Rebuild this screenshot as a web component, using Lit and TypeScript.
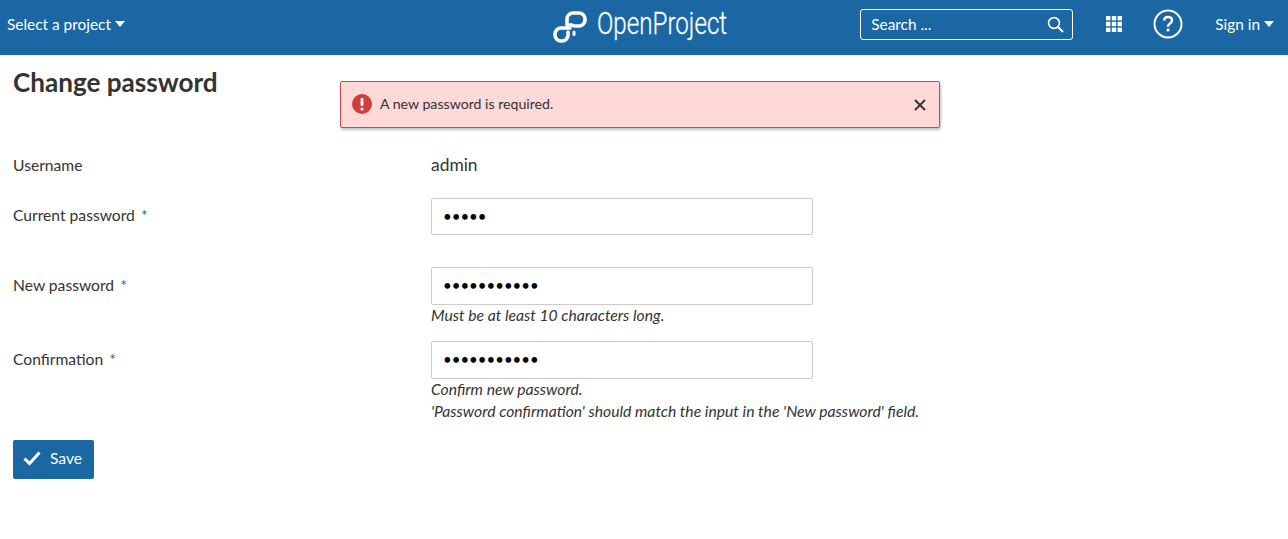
import { LitElement, html, css } from "lit";
import { customElement } from "lit/decorators.js";

@customElement("app-root")
export class AppRoot extends LitElement {
  static styles = css`
    :host { display: block; font-family: Lato, "Noto Sans", sans-serif; color: #333; position: relative; height: 539px; overflow: hidden; background: #fff; }
    .header { height: 55px; box-sizing: border-box; padding-bottom: 7px; background: #1a67a3; display: grid; grid-template-columns: 1fr auto 1fr; align-items: center; color: #fff; font-size: 15.4px; }
    .left { padding-left: 7px; display: flex; align-items: center; }
    .caret { display: inline-block; width: 0; height: 0; border-left: 5.5px solid transparent; border-right: 5.5px solid transparent; border-top: 6px solid #fff; margin-left: 4px; }
    .center { display: flex; align-items: center; gap: 9px; width: 174px; margin: 0 4px 0 -4px; }
    .center svg { margin-top: 5px; flex: none; }
    .logo-text { font-family: Roboto, sans-serif; font-weight: 300; font-size: 32px; line-height: 40px; width: 130px; transform: scaleX(0.755); transform-origin: left center; white-space: nowrap; margin-top: -3px; -webkit-text-stroke: 0.3px #fff; }
    .right { display: flex; align-items: center; justify-content: flex-end; padding-right: 14px; }
    .search { width: 213px; height: 31px; box-sizing: border-box; border: 1px solid #fff; border-radius: 3px; display: flex; align-items: center; justify-content: space-between; padding: 0 8px 0 10px; margin-right: 33px; }
    .help { margin: 0 32px 0 31px; display: flex; }
    .signin { display: flex; align-items: center; }
    .page { padding: 0 13px; position: relative; }
    h1 { margin: 0; padding-top: 11px; font-size: 26.1px; line-height: 32px; font-weight: 700; color: #333; }
    .flash { position: absolute; left: 340px; top: 81px; width: 600px; height: 47px; box-sizing: border-box; background: #ffd8d8; border: 1px solid #c44a4f; border-radius: 2px; box-shadow: 1px 2px 3px rgba(0,0,0,.25); display: flex; align-items: center; padding: 0 13px 2px 11px; font-size: 14.15px; color: #333; gap: 8px; }
    .flash span { flex: 1; margin-top: -1px; }
    .flash .close { margin-top: 2px; }
    form { margin: 0; padding-top: 57px; }
    .row { display: grid; grid-template-columns: 418px 382px; }
    .label { font-size: 15.65px; line-height: 20px; color: #333; }
    .label b { font-weight: 400; color: #1a67a3; margin-left: 2px; }
    .r-user { height: 43px; }
    .r-user .val { font-size: 17.4px; line-height: 20px; }
    .r-cur { height: 69px; }
    .r-new { height: 74px; }
    .r-conf { height: 99px; }
    .r-cur .label { padding-top: 7px; }
    .r-new .label, .r-conf .label { padding-top: 8px; }
    input { display: block; width: 382px; box-sizing: border-box; height: 37px; border: 1px solid #cbcbcb; border-radius: 2px; padding: 0 11px 2px; font-family: Lato, sans-serif; font-size: 15px; color: #000; background: #fff; outline: none; margin: 0; }
    .r-new input, .r-conf input { height: 38px; margin-bottom: -1px; }
    .hint { font-style: italic; font-size: 15.7px; line-height: 22px; color: #333; white-space: nowrap; }
    .save { display: inline-flex; align-items: center; gap: 9px; height: 39px; width: 81px; box-sizing: border-box; padding: 0 0 3px 10px; background: #1a67a3; border: 0; border-radius: 2px; color: #fff; font-family: Lato, sans-serif; font-size: 15.6px; }
  `;

  render() {
    return html`
      <div class="header">
        <div class="left">Select a project<i class="caret"></i></div>
        <div class="center">
          <svg width="35" height="33" viewBox="0 0 35 33" fill="none" stroke="#fff" stroke-width="3.6" stroke-linecap="round" stroke-linejoin="round">
            <path d="M19 15H14V9a6 6 0 0 1 6-6h6a6 6 0 0 1 6 6v1a6 6 0 0 1-6 6h-5"/>
            <path d="M17 18H8a6 6 0 0 0-6 6v1a6 6 0 0 0 6 6h1a6 6 0 0 0 6-6v-3"/>
            <path d="M21 22v2.5" stroke-width="3"/>
          </svg>
          <span class="logo-text">OpenProject</span>
        </div>
        <div class="right">
          <div class="search">
            <span>Search ...</span>
            <svg width="17" height="17" viewBox="0 0 17 17" fill="none" stroke="#fff" stroke-width="1.6"><circle cx="7" cy="7" r="5.4"/><path d="M11 11l5 5" stroke-width="2"/></svg>
          </div>
          <svg width="16" height="16" viewBox="0 0 16 16" fill="#fff"><rect x="0" y="0" width="4.4" height="4.4"/><rect x="5.8" y="0" width="4.4" height="4.4"/><rect x="11.6" y="0" width="4.4" height="4.4"/><rect x="0" y="5.8" width="4.4" height="4.4"/><rect x="5.8" y="5.8" width="4.4" height="4.4"/><rect x="11.6" y="5.8" width="4.4" height="4.4"/><rect x="0" y="11.6" width="4.4" height="4.4"/><rect x="5.8" y="11.6" width="4.4" height="4.4"/><rect x="11.6" y="11.6" width="4.4" height="4.4"/></svg>
          <span class="help">
            <svg width="30" height="30" viewBox="0 0 30 30" fill="none" stroke="#fff" stroke-width="2"><circle cx="15" cy="15" r="13.5"/><path d="M11 11.5a4 4 0 0 1 4-3.5c2.4 0 4 1.5 4 3.4 0 3-4 3-4 6.3" stroke-width="2.4"/><rect x="13.6" y="19.6" width="2.8" height="2.8" fill="#fff" stroke="none"/></svg>
          </span>
          <div class="signin">Sign in<i class="caret"></i></div>
        </div>
      </div>
      <div class="page">
        <h1>Change password</h1>
        <form>
          <div class="row r-user"><div class="label">Username</div><div class="val">admin</div></div>
          <div class="row r-cur"><div class="label">Current password <b>*</b></div><div><input type="password" .value=${"admin"} /></div></div>
          <div class="row r-new"><div class="label">New password <b>*</b></div><div><input type="password" .value=${"adminadmin!"} /><div class="hint">Must be at least 10 characters long.</div></div></div>
          <div class="row r-conf"><div class="label">Confirmation <b>*</b></div><div><input type="password" .value=${"adminadmin!"} /><div class="hint">Confirm new password.</div><div class="hint">'Password confirmation' should match the input in the 'New password' field.</div></div></div>
          <button class="save" type="button">
            <svg width="18" height="15" viewBox="0 0 18 15" fill="none" stroke="#fff" stroke-width="3"><path d="M1.5 7.5l5 5L16.5 1.5"/></svg>
            Save
          </button>
        </form>
      </div>
      <div class="flash">
        <svg width="20" height="20" viewBox="0 0 20 20"><circle cx="10" cy="10" r="10" fill="#cf3f3f"/><rect x="8.6" y="4" width="2.8" height="8" rx="1" fill="#fff"/><circle cx="10" cy="15" r="1.6" fill="#fff"/></svg>
        <span>A new password is required.</span>
        <svg class="close" width="12" height="12" viewBox="0 0 12 12" stroke="#333" stroke-width="1.9" fill="none"><path d="M1 1l10 10M11 1L1 11"/></svg>
      </div>
    `;
  }
}
